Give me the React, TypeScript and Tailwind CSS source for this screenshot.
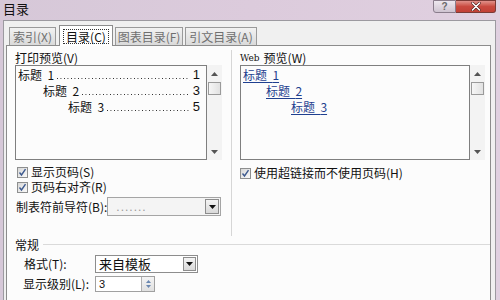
import React from "react";

function Check() {
  return (
    <span className="w-[11px] h-[11px] border border-[#8e8f8f] bg-gradient-to-br from-[#d8d8d8] to-[#fafafa] flex items-center justify-center shrink-0">
      <svg width="9" height="9" viewBox="0 0 9 9">
        <path d="M1.5 4.5 L3.5 7 L7.5 1.2" stroke="#3d5a8f" strokeWidth="1.4" fill="none" />
      </svg>
    </span>
  );
}

function ArrowBtn({ w = 14, h = 15 }: { w?: number; h?: number }) {
  return (
    <span
      className="border border-[#8d8d8d] bg-gradient-to-b from-[#f4f4f4] to-[#d9d9d9] flex items-center justify-center shrink-0"
      style={{ width: w, height: h }}
    >
      <svg width="7" height="4" viewBox="0 0 7 4">
        <path d="M0 0 L7 0 L3.5 4 Z" fill="#111" />
      </svg>
    </span>
  );
}

function Scrollbar() {
  return (
    <div className="w-[15px] bg-[#f3f3f3] flex flex-col items-center shrink-0">
      <div className="h-[17px] flex items-center justify-center">
        <svg width="7" height="4" viewBox="0 0 7 4">
          <path d="M3.5 0 L7 4 L0 4 Z" fill="#555" />
        </svg>
      </div>
      <div className="w-[13px] h-[13px] border border-[#9a9a9a] bg-gradient-to-r from-[#f6f6f6] to-[#e2e2e2]" />
      <div className="flex-1" />
      <div className="h-[17px] flex items-center justify-center">
        <svg width="7" height="4" viewBox="0 0 7 4">
          <path d="M0 0 L7 0 L3.5 4 Z" fill="#555" />
        </svg>
      </div>
    </div>
  );
}

function PrintRow({ indent, n, page }: { indent: number; n: string; page: string }) {
  return (
    <div className="h-[16px] flex items-center text-[12px] leading-[16px] text-[#111] min-w-0" style={{ paddingLeft: indent }}>
      <span className="whitespace-nowrap shrink-0">标题&nbsp;&nbsp;{n}</span>
      <span className="flex-1 min-w-0 self-end mb-[4px] mx-[3px] h-[1px] bg-[linear-gradient(to_right,#222_1px,transparent_1px)] bg-[length:3.5px_1px] bg-repeat-x" />
      <span className="shrink-0 font-['Liberation_Sans',sans-serif] text-[13px]">{page}</span>
    </div>
  );
}

function WebRow({ indent, n }: { indent: number; n: string }) {
  return (
    <div className="h-[16px] flex items-center text-[12px] leading-[16px]" style={{ paddingLeft: indent }}>
      <span className="whitespace-nowrap text-[#1f3f8f] underline underline-offset-2">标题&nbsp;&nbsp;{n}</span>
    </div>
  );
}

export default function App() {
  return (
    <div className="w-[500px] h-[300px] overflow-hidden flex flex-col bg-gradient-to-r from-[#d6c8d8] via-[#dccbdc] to-[#e0d0e0] font-['Noto_Sans_CJK_SC','Noto_Sans',sans-serif] text-[#111]">
      {/* title bar */}
      <div className="h-[20px] flex items-start justify-between shrink-0">
        <span className="pl-[3px] pt-[1px] text-[13px] leading-[16px] text-[#111]">目录</span>
        <div className="flex pr-[4px]">
          <div className="w-[23px] h-[13px] border border-[#8a7d8c] rounded-bl-[3px] bg-gradient-to-b from-[#eee8ef] to-[#cfc4d1] flex items-center justify-center text-[10px] leading-none text-[#6a6a6a] font-['Liberation_Sans',sans-serif] font-bold">
            ?
          </div>
          <div className="w-[40px] h-[13px] border border-l-0 border-[#7a3a36] rounded-br-[3px] bg-gradient-to-b from-[#e0908a] via-[#c94a40] to-[#c24036] flex items-center justify-center">
            <svg width="10" height="9" viewBox="0 0 10 9">
              <path d="M1.5 1 L8.5 8 M8.5 1 L1.5 8" stroke="#4a1a18" strokeWidth="2.6" strokeLinecap="round" />
              <path d="M1.5 1 L8.5 8 M8.5 1 L1.5 8" stroke="#fff" strokeWidth="1.6" strokeLinecap="round" />
            </svg>
          </div>
        </div>
      </div>

      {/* body */}
      <div className="flex-1 ml-[3px] mr-[4px] border border-b-0 border-[#9c9aa0] bg-[#f0f0f0] pl-[2px] pr-[4px] pt-[4px] flex flex-col">
        {/* tabs */}
        <div className="h-[20px] flex items-end pl-[3px] text-[12px] leading-[14px]">
          <div className="w-[47px] h-[18px] border border-b-0 border-[#9a9a9a] bg-gradient-to-b from-[#f2f2f2] to-[#dadada] flex items-center justify-center text-[#6f6f6f]">
            索引(X)
          </div>
          <div className="ml-[3px] w-[54px] h-[21px] -mb-px border border-b-0 border-[#8c8c8c] bg-white flex items-center justify-center relative z-10">
            <span className="border border-dotted border-[#333] px-[2px] leading-[13px]">目录(C)</span>
          </div>
          <div className="ml-[2px] w-[68px] h-[18px] border border-b-0 border-[#9a9a9a] bg-gradient-to-b from-[#f2f2f2] to-[#dadada] flex items-center justify-center text-[#6f6f6f]">
            图表目录(F)
          </div>
          <div className="ml-[2px] w-[72px] h-[18px] border border-b-0 border-[#9a9a9a] bg-gradient-to-b from-[#f2f2f2] to-[#dadada] flex items-center justify-center text-[#6f6f6f]">
            引文目录(A)
          </div>
        </div>

        {/* panel */}
        <div className="flex-1 border border-b-0 border-[#8c8c8c] bg-[#fcfcfc] pt-[4px] pr-[5px] flex flex-col text-[12px] leading-[14px]">
          <div className="flex">
            {/* left column */}
            <div className="w-[225px] shrink-0 pl-[8px] pr-[9px] pb-[20px] border-r border-[#d6d6d6] flex flex-col">
              <div className="h-[15px] flex items-center">打印预览(V)</div>
              <div className="h-[95px] flex">
                <div className="flex-1 min-w-0 overflow-hidden border border-[#7f7f7f] pt-[1px] pl-[2px] pr-[6px]">
                  <PrintRow indent={0} n="1" page="1" />
                  <PrintRow indent={25} n="2" page="3" />
                  <PrintRow indent={50} n="3" page="5" />
                </div>
                <Scrollbar />
              </div>
              <div className="mt-[5px] h-[14px] flex items-center pl-[2px] gap-[3px]">
                <Check />
                <span className="whitespace-nowrap">显示页码(S)</span>
              </div>
              <div className="mt-[1px] h-[14px] flex items-center pl-[2px] gap-[3px]">
                <Check />
                <span className="whitespace-nowrap">页码右对齐(R)</span>
              </div>
              <div className="mt-[3px] h-[19px] flex items-center">
                <span className="pl-[1px] whitespace-nowrap shrink-0">制表符前导符(B):</span>
                <div className="ml-auto mr-[1px] w-[114px] shrink-0 h-[19px] border border-[#a5a5a5] bg-[#f4f4f4] flex items-center pl-[8px] pr-[1px]">
                  <span className="flex-1 text-[#9a9a9a] font-['Liberation_Sans',sans-serif] tracking-[1px]">.......</span>
                  <ArrowBtn w={14} h={15} />
                </div>
              </div>
            </div>

            {/* right column */}
            <div className="flex-1 min-w-0 pl-[8px] flex flex-col">
              <div className="h-[15px] flex items-center">
                <span className="font-['DejaVu_Serif',serif] text-[9px] mr-[4px]">Web</span>预览(W)
              </div>
              <div className="h-[95px] flex">
                <div className="flex-1 min-w-0 border border-[#7f7f7f] pt-[1px] pl-[2px]">
                  <WebRow indent={0} n="1" />
                  <WebRow indent={23} n="2" />
                  <WebRow indent={48} n="3" />
                </div>
                <Scrollbar />
              </div>
              <div className="mt-[6px] h-[14px] flex items-center gap-[3px]">
                <Check />
                <span className="whitespace-nowrap">使用超链接而不使用页码(H)</span>
              </div>
            </div>
          </div>

          {/* 常规 group */}
          <div className="mt-[2px] h-[14px] flex items-center pl-[8px]">
            <span>常规</span>
            <div className="flex-1 ml-[4px] border-t border-[#dadada] -mr-[5px] mt-[-2px]" />
          </div>
          <div className="mt-[3px] h-[18px] flex items-center pl-[17px]">
            <span className="w-[71px] whitespace-nowrap">格式(T):</span>
            <div className="w-[103px] h-[18px] border border-[#8d8d8d] bg-white flex items-center pl-[3px] pr-[1px]">
              <span className="flex-1 text-[13px]">来自模板</span>
              <ArrowBtn w={13} h={14} />
            </div>
          </div>
          <div className="mt-[3px] h-[16px] flex items-center pl-[16px]">
            <span className="w-[72px] whitespace-nowrap">显示级别(L):</span>
            <div className="w-[60px] h-[16px] border border-[#a0a0a0] bg-white flex items-center pl-[3px]">
              <span className="flex-1 font-['Liberation_Sans',sans-serif] text-[11px]">3</span>
              <div className="w-[13px] h-[14px] border-l border-[#b0b0b0] bg-gradient-to-b from-[#f4f4f4] to-[#e0e0e0] flex flex-col items-center justify-center gap-[2px]">
                <svg width="5" height="3" viewBox="0 0 5 3"><path d="M2.5 0 L5 3 L0 3 Z" fill="#6a87b0" /></svg>
                <svg width="5" height="3" viewBox="0 0 5 3"><path d="M0 0 L5 0 L2.5 3 Z" fill="#6a87b0" /></svg>
              </div>
            </div>
          </div>
        </div>
      </div>
    </div>
  );
}
